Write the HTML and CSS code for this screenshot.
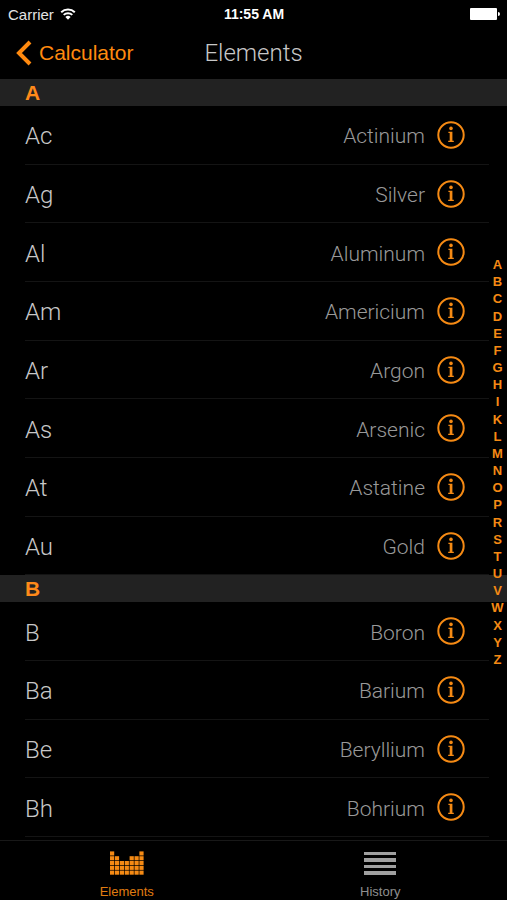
FILE: index.html
```html
<!DOCTYPE html>
<html lang="en">
    <head>
        <meta charset="UTF-8" />
        <meta name="viewport" content="width=device-width, initial-scale=1.0" />
        <link rel="stylesheet" href="styles.css">
        <title>Elements</title>
    </head>
    <body>
        <div class="status">
            <div class="carrier">
                Carrier
                <svg class="wifi" width="16" height="12" viewBox="0 0 16 12">
                    <path d="M1.2 4.2a9.8 9.8 0 0 1 13.6 0M3.7 6.9a6.2 6.2 0 0 1 8.6 0" />
                    <path class="solid" d="M8 11.8 5.4 9a3.8 3.8 0 0 1 5.2 0z" />
                </svg>
            </div>
            <div class="time">11:55 AM</div>
            <svg class="battery" width="30" height="12" viewBox="0 0 30 12">
                <rect width="27" height="12" rx="1" />
                <path d="M28 4a2 2 0 0 1 0 4z" />
            </svg>
        </div>
        <header class="navbar">
            <a class="back" href="#">
                <svg width="16" height="26" viewBox="0 0 16 26">
                    <path d="M14 2 3 13l11 11" />
                </svg>
                Calculator
            </a>
            <h1>Elements</h1>
        </header>
        <main>
            <div class="list" id="list"></div>
            <nav class="index" id="index" aria-label="Index"></nav>
        </main>
        <nav class="tabbar">
            <a class="tab active" href="#">
                <svg width="34" height="24" viewBox="0 0 34 24" id="blocks"></svg>
                Elements
            </a>
            <a class="tab" href="#">
                <svg width="32" height="24" viewBox="0 0 32 24">
                    <path d="M0 1h32v3H0zM0 7h32v4H0zM0 14h32v3H0zM0 20h32v4H0z" />
                </svg>
                History
            </a>
        </nav>
        <script src="script.js"></script>
    </body>
</html>
```
FILE: styles.css
```css
* {
    margin: 0;
    padding: 0;
    box-sizing: border-box;
}

body {
    display: flex;
    flex-direction: column;
    min-height: 100vh;
    background-color: #000;
    color: #c8c8c8;
    font-family: "Liberation Sans", Arial, sans-serif;
}

a {
    color: inherit;
    text-decoration: none;
}

.status {
    display: grid;
    grid-template-columns: 1fr auto 1fr;
    align-items: center;
    height: 28px;
    padding: 0 7px 0 8px;
    font-size: 14px;
    color: #fff;
}

.carrier {
    display: flex;
    align-items: center;
    gap: 6px;
    font-size: 15px;
    color: #e4e4e4;
}

.time {
    font-weight: bold;
}

.wifi {
    fill: none;
    stroke: #fff;
    stroke-width: 2;
}

.wifi .solid {
    fill: #fff;
    stroke: none;
}

.battery {
    justify-self: end;
    fill: #fff;
}

.navbar {
    display: grid;
    grid-template-columns: 1fr auto 1fr;
    align-items: center;
    height: 51px;
    padding: 0 16px 2px;
}

.navbar h1 {
    font: 300 24px "Roboto", sans-serif;
    color: #c8c8c8;
}

.back {
    display: flex;
    align-items: center;
    gap: 7px;
    font-size: 21px;
    color: #ff8a0f;
}

.back svg {
    fill: none;
    stroke: #ff8a0f;
    stroke-width: 4;
}

main {
    position: relative;
    display: flex;
    flex: 1;
}

.list {
    display: flex;
    flex-direction: column;
    flex: 1;
    padding-bottom: 3px;
}

.list h2 {
    height: 27px;
    padding-left: 25px;
    background-color: #222;
    color: #ff8a1a;
    font-size: 21px;
    line-height: 28px;
}

.row {
    display: flex;
    align-items: center;
    flex: 1;
    gap: 12px;
    min-height: 56px;
    margin: 0 18px 0 25px;
    padding-right: 24px;
    border-bottom: 1px solid #141414;
    font-family: "Roboto", sans-serif;
    font-weight: 300;
}

.symbol,
.name {
    padding-top: 3px;
}

.symbol {
    flex: 1;
    font-size: 24px;
}

.name {
    font-size: 21px;
    color: #999;
}

.info {
    width: 28px;
    height: 28px;
    border: none;
    background: none;
    cursor: pointer;
}

.info svg {
    display: block;
    fill: #f58a14;
}

.info circle {
    fill: none;
    stroke: #f58a14;
    stroke-width: 2;
}

.info .dot {
    fill: #f58a14;
    stroke: none;
}

.index {
    position: absolute;
    top: 177px;
    right: 0;
    display: flex;
    flex-direction: column;
    width: 19px;
    height: 412px;
    color: #f58a14;
    font-size: 13px;
    font-weight: bold;
    text-align: center;
}

.index a {
    flex: 1;
    line-height: 17px;
}

.tabbar {
    display: grid;
    grid-template-columns: 1fr 1fr;
    height: 60px;
    border-top: 1px solid #181818;
}

.tab {
    display: flex;
    flex-direction: column;
    align-items: center;
    gap: 9px;
    padding-top: 10px;
    font-size: 13px;
    color: #8f8f8f;
    fill: #a0a0a0;
}

.tab.active {
    color: #e07c10;
    fill: #f58a14;
}
```
FILE: script.js
```js
const sections = {
    A: [
        ["Ac", "Actinium"],
        ["Ag", "Silver"],
        ["Al", "Aluminum"],
        ["Am", "Americium"],
        ["Ar", "Argon"],
        ["As", "Arsenic"],
        ["At", "Astatine"],
        ["Au", "Gold"],
    ],
    B: [
        ["B", "Boron"],
        ["Ba", "Barium"],
        ["Be", "Beryllium"],
        ["Bh", "Bohrium"],
    ],
};

const infoIcon = `
    <svg width="28" height="28" viewBox="0 0 28 28">
        <circle cx="14" cy="14" r="12.7" />
        <circle class="dot" cx="14" cy="7.4" r="1.8" />
        <path d="M11.4 10.8h4v9h1.4v1.2h-5.6v-1.2h1.5v-7.8h-1.3z" />
    </svg>`;

let html = "";
for (const letter in sections) {
    html += `<h2 id="${letter}">${letter}</h2>`;
    for (const [symbol, name] of sections[letter]) {
        html += `
            <div class="row">
                <span class="symbol">${symbol}</span>
                <span class="name">${name}</span>
                <button class="info" aria-label="About ${name}">${infoIcon}</button>
            </div>`;
    }
}
document.getElementById("list").innerHTML = html;

document.getElementById("index").innerHTML = [..."ABCDEFGHIKLMNOPRSTUVWXYZ"]
    .map((letter) => `<a href="#${letter}">${letter}</a>`)
    .join("");

// periodic table icon, one number per column
const heights = [5, 4, 3, 3, 4, 4, 5];
let blocks = "";
heights.forEach((count, col) => {
    for (let i = 0; i < count; i++) {
        blocks += `<rect x="${col * 4.9}" y="${19.6 - i * 4.8}" width="4.2" height="4.1" />`;
    }
});
document.getElementById("blocks").innerHTML = blocks;
```
